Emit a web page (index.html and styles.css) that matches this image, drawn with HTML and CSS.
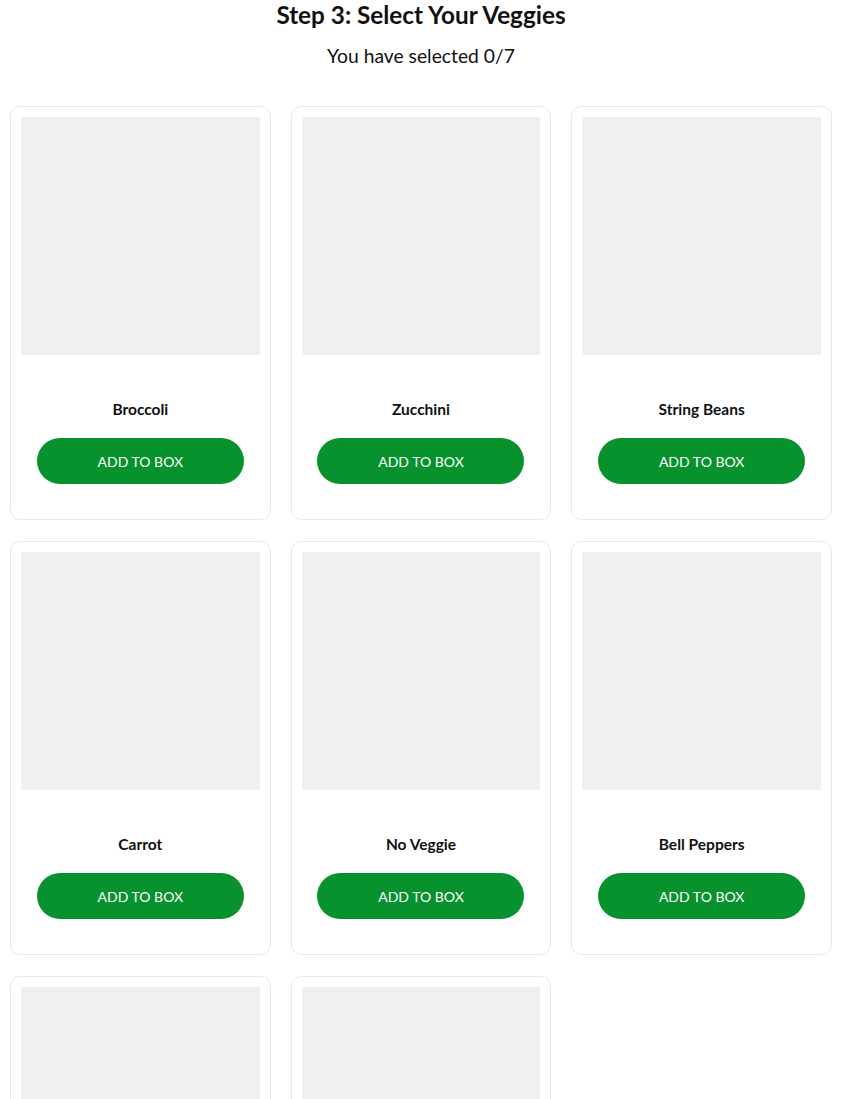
FILE: index.html
```html
<!DOCTYPE html>
<html lang="en">
<head>
<meta charset="utf-8">
<title>Step 3: Select Your Veggies</title>
<link rel="stylesheet" href="styles.css">
</head>
<body>
<main class="page">
  <header class="head">
    <h1 class="title">Step 3: Select Your Veggies</h1>
    <p class="count">You have selected 0/7</p>
  </header>
  <section class="grid">
    <article class="card"><div class="thumb"></div><h2 class="name">Broccoli</h2><button class="add">ADD TO BOX</button></article>
    <article class="card"><div class="thumb"></div><h2 class="name">Zucchini</h2><button class="add">ADD TO BOX</button></article>
    <article class="card"><div class="thumb"></div><h2 class="name">String Beans</h2><button class="add">ADD TO BOX</button></article>
    <article class="card"><div class="thumb"></div><h2 class="name">Carrot</h2><button class="add">ADD TO BOX</button></article>
    <article class="card"><div class="thumb"></div><h2 class="name">No Veggie</h2><button class="add">ADD TO BOX</button></article>
    <article class="card"><div class="thumb"></div><h2 class="name">Bell Peppers</h2><button class="add">ADD TO BOX</button></article>
    <article class="card"><div class="thumb"></div><h2 class="name">Spinach</h2><button class="add">ADD TO BOX</button></article>
    <article class="card"><div class="thumb"></div><h2 class="name">Kale</h2><button class="add">ADD TO BOX</button></article>
  </section>
</main>
</body>
</html>
```
FILE: styles.css
```css
* { box-sizing: border-box; }
html, body { margin: 0; padding: 0; background: #fff; }
body { font-family: Lato, "Liberation Sans", sans-serif; color: #111; }
.page { padding: 0 10px; }
.head { text-align: center; }
.title {
  margin: 0;
  font-size: 24.3px;
  font-weight: 700;
  line-height: 30px;
  color: #111;
}
.count {
  margin: 10px 0 0;
  font-size: 19.3px;
  line-height: 32px;
  font-weight: 400;
  color: #111;
}
.grid {
  margin-top: 34px;
  display: grid;
  grid-template-columns: repeat(3, 1fr);
  column-gap: 20px;
  row-gap: 21px;
}
.card {
  border: 1px solid #e9e9e9;
  border-radius: 10px;
  padding: 10px 10px 35px;
  display: flex;
  flex-direction: column;
  align-items: center;
}
.thumb {
  width: 100%;
  height: 238px;
  background: #f0f0f0;
}
.name {
  margin: 45px 0 0;
  font-size: 15.5px;
  line-height: 18px;
  font-weight: 700;
  color: #111;
}
.add {
  margin-top: 20px;
  width: 207px;
  height: 46px;
  border: 0;
  border-radius: 23px;
  background: #08922e;
  color: #fff;
  font-family: Lato, "Liberation Sans", sans-serif;
  font-size: 14px;
  font-weight: 400;
  cursor: pointer;
}
```
